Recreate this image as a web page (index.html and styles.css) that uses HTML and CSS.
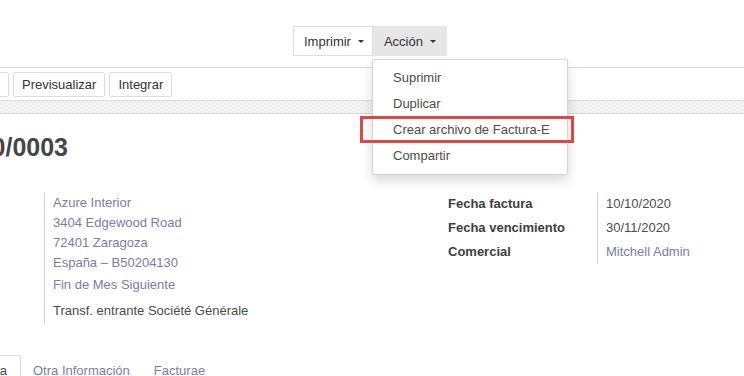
FILE: index.html
```html
<!DOCTYPE html>
<html lang="es">
<head>
    <meta charset="UTF-8">
    <meta name="viewport" content="width=device-width, initial-scale=1.0">
    <title>Factura INV/2020/0003</title>
    <link rel="stylesheet" href="styles.css">
</head>
<body>
    <div class="control-panel">
        <div class="actions">
            <div class="btn-group">
                <button class="btn-drop">Imprimir <span class="caret"></span></button>
                <button class="btn-drop open">Acción <span class="caret"></span></button>
                <ul class="dropdown-menu">
                    <li>Suprimir</li>
                    <li>Duplicar</li>
                    <li>Crear archivo de Factura-E<span class="highlight"></span></li>
                    <li>Compartir</li>
                </ul>
            </div>
        </div>
    </div>

    <div class="statusbar">
        <button class="btn btn-cut">Confirmar</button>
        <button class="btn">Previsualizar</button>
        <button class="btn">Integrar</button>
    </div>
    <div class="checker"></div>

    <div class="sheet">
        <h1 class="title">INV/2020/0003</h1>

        <div class="main">
            <div class="partner">
                <div class="partner-box">
                    <a href="#" class="link">Azure Interior</a>
                    <div class="address">
                        <a href="#" class="link">3404 Edgewood Road</a>
                        <a href="#" class="link">72401 Zaragoza</a>
                        <a href="#" class="link">España – B50204130</a>
                    </div>
                    <a href="#" class="link terms">Fin de Mes Siguiente</a>
                    <div class="bank">Transf. entrante Société Générale</div>
                </div>
            </div>

            <div class="dates">
                <div class="label">Fecha factura</div>
                <div class="value">10/10/2020</div>
                <div class="label">Fecha vencimiento</div>
                <div class="value">30/11/2020</div>
                <div class="label">Comercial</div>
                <div class="value"><a href="#" class="link">Mitchell Admin</a></div>
            </div>
        </div>

        <div class="tabs">
            <a href="#" class="tab active">Líneas de factura</a>
            <a href="#" class="tab">Otra Información</a>
            <a href="#" class="tab">Facturae</a>
        </div>
    </div>
</body>
</html>
```

FILE: styles.css
```css
body {
    margin: 0;
    font-family: "Liberation Sans", Arial, sans-serif;
    font-size: 13px;
    color: #4c4c4c;
    background-color: #fff;
    overflow: hidden;
}

/* top bar with print / action buttons */
.control-panel {
    height: 41px;
    padding-top: 26px;
    border-bottom: 1px solid #d9d9d9;
}
.actions {
    display: flex;
    padding-left: 293px;
}
.btn-group {
    position: relative;
    display: flex;
}
.btn-drop {
    font: inherit;
    color: #333;
    background-color: #fff;
    border: 1px solid #ddd;
    height: 30px;
    padding: 0 8px 0 10px;
    display: flex;
    align-items: center;
    gap: 7px;
}
.btn-drop.open {
    background-color: #e6e6e6;
    border-color: #e6e6e6;
    padding: 0 10px 0 10px;
}
.caret {
    display: inline-block;
    width: 0;
    height: 0;
    border-top: 3px solid #333;
    border-left: 3px solid transparent;
    border-right: 3px solid transparent;
}
.dropdown-menu {
    position: absolute;
    left: 79px;
    top: 33px;
    width: 194px;
    margin: 0;
    padding: 5px 0;
    list-style: none;
    background-color: #fff;
    border: 1px solid #d4d4d4;
    border-radius: 2px;
    box-shadow: 0 6px 12px rgba(0, 0, 0, 0.15);
}
.dropdown-menu li {
    position: relative;
    line-height: 26px;
    padding: 0 20px;
    color: #4c4c4c;
    white-space: nowrap;
}
.highlight {
    position: absolute;
    left: -13px;
    top: -1px;
    width: 214px;
    height: 27px;
    box-sizing: border-box;
    border: 3px solid #dc4848;
}

/* status bar */
.statusbar {
    display: flex;
    gap: 4px;
    height: 28px;
    padding-top: 4px;
    border-bottom: 1px solid #d9d9d9;
}
.btn {
    font: inherit;
    color: #333;
    background-color: #fff;
    border: 1px solid #ddd;
    border-radius: 2px;
    height: 25px;
    padding: 0 8px;
    white-space: nowrap;
}
.btn-cut {
    width: 80px;
    margin-left: -71px;
    text-align: left;
    overflow: hidden;
}
.checker {
    height: 12px;
    border-bottom: 1px solid #d9d9d9;
    background: repeating-conic-gradient(#ececec 0 25%, #f7f7f7 0 50%) 0 0 / 4px 4px;
}

/* form sheet */
.title {
    width: 200px;
    margin: 18px 0 0 -132px;
    text-align: right;
    white-space: nowrap;
    font-size: 25px;
    line-height: 30px;
    font-weight: bold;
    color: #454545;
}
.main {
    display: flex;
    align-items: flex-start;
    margin-top: 31px;
    padding-left: 44px;
}
.link {
    color: #7c7bad;
    text-decoration: none;
}
.partner {
    width: 404px;
}
.partner-box {
    border-left: 1px solid #d4d4d4;
    padding: 0 0 4px 8px;
    line-height: 20px;
}
.partner-box .link,
.address .link {
    display: block;
}
.terms {
    margin-top: 2px;
}
.bank {
    margin-top: 6px;
}
.dates {
    display: grid;
    grid-template-columns: 149px auto;
    line-height: 24px;
    margin-top: -1px;
}
.label {
    font-weight: bold;
    color: #3d3d3d;
}
.value {
    border-left: 1px solid #d4d4d4;
    padding-left: 8px;
}

/* notebook tabs */
.tabs {
    display: flex;
    margin-top: 30px;
}
.tab {
    padding: 5px 11px 5px;
    line-height: 20px;
    border: 1px solid transparent;
    border-bottom: none;
    color: #7c7bad;
    text-decoration: none;
    white-space: nowrap;
}
.tab.active {
    box-sizing: border-box;
    width: 140px;
    margin-left: -119px;
    padding-right: 13px;
    text-align: right;
    color: #4c4c4c;
    border-color: #ddd;
    border-radius: 2px 2px 0 0;
}
```
